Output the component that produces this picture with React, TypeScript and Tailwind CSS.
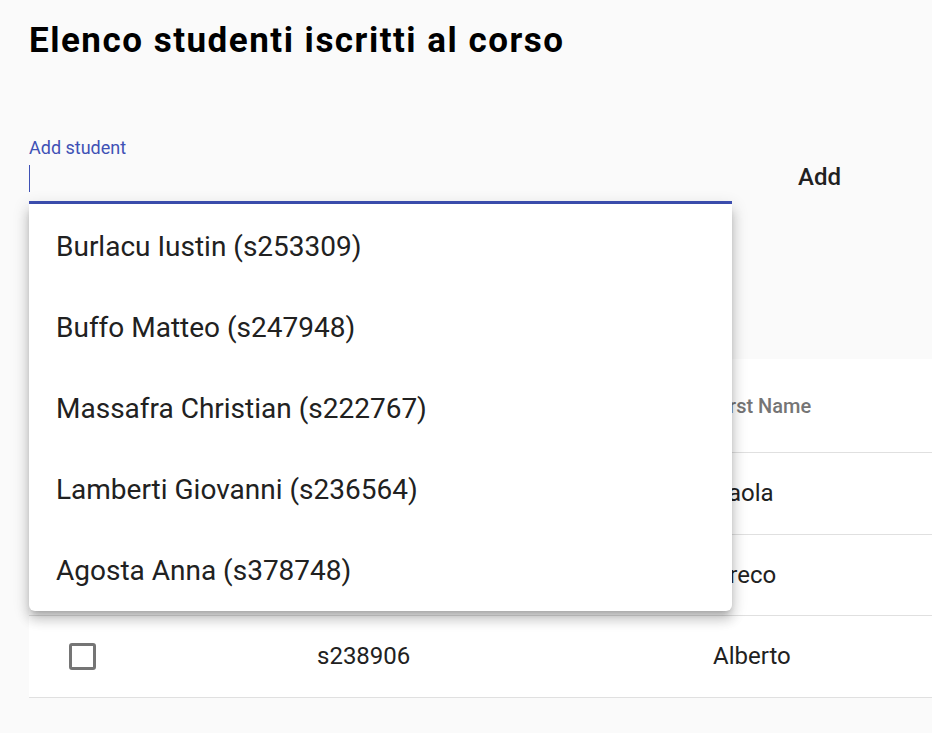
import React from "react";

interface IStudent {
  id: string;
  firstName: string;
}

const suggestions: string[] = [
  "Burlacu Iustin (s253309)",
  "Buffo Matteo (s247948)",
  "Massafra Christian (s222767)",
  "Lamberti Giovanni (s236564)",
  "Agosta Anna (s378748)",
];

const students: IStudent[] = [
  { id: "s241521", firstName: "Paola" },
  { id: "s262843", firstName: "Greco" },
  { id: "s238906", firstName: "Alberto" },
];

const Checkbox: React.FC = () => (
  <span className="block w-[27px] h-[27px] rounded-[3px] border-[3px] border-[#757575]" />
);

const App: React.FC = () => {
  return (
    <div className="min-h-[748px] bg-white font-['Roboto',sans-serif]">
      <div className="h-[733px] bg-[#fafafa] pl-[29px] overflow-hidden">
        <h1 className="pt-[20px] text-[35px] leading-[42px] font-bold tracking-[1.5px] text-black">
          Elenco studenti iscritti al corso
        </h1>

        <div className="mt-[75px] flex items-start">
          <div className="relative w-[703px] z-20">
            <label className="block text-[18px] leading-[21px] text-[#3f51b5]">
              Add student
            </label>
            <div className="h-[43px] pt-[7px]">
              <span className="block w-px h-[27px] bg-[#3f51b5]" />
            </div>
            <div className="h-[3px] bg-[#3f51b5]" />

            {/* autocomplete suggestions */}
            <ul className="absolute left-0 right-0 top-full pt-[2px] bg-white rounded-b-[6px] shadow-[0_5px_6px_-3px_rgba(0,0,0,0.2),0_9px_12px_1px_rgba(0,0,0,0.14),0_3px_16px_2px_rgba(0,0,0,0.12)]">
              {suggestions.map((s: string, _idx: number) => (
                <li
                  key={_idx}
                  className="h-[81px] flex items-center pl-[27px] text-[28px] text-[#212121]"
                >
                  {s}
                </li>
              ))}
            </ul>
          </div>

          <button className="ml-[66px] mt-[22px] text-[24px] font-medium text-[#212121]">
            Add
          </button>
        </div>

        <div className="mt-[155px] w-[1000px] bg-white">
          <div className="grid grid-cols-[248px_396px_1fr] h-[94px] items-center border-b border-[#e0e0e0] pl-[40px] text-[20px] font-medium text-[#757575]">
            <Checkbox />
            <span>Student ID</span>
            <span>First Name</span>
          </div>
          {students.map((st: IStudent, _idx: number) => (
            <div
              key={_idx}
              className="grid grid-cols-[248px_396px_1fr] h-[81.5px] items-center border-b border-[#e0e0e0] pl-[40px] text-[24px] text-[#212121]"
            >
              <Checkbox />
              <span>{st.id}</span>
              <span>{st.firstName}</span>
            </div>
          ))}
        </div>
      </div>
    </div>
  );
};

export default App;
